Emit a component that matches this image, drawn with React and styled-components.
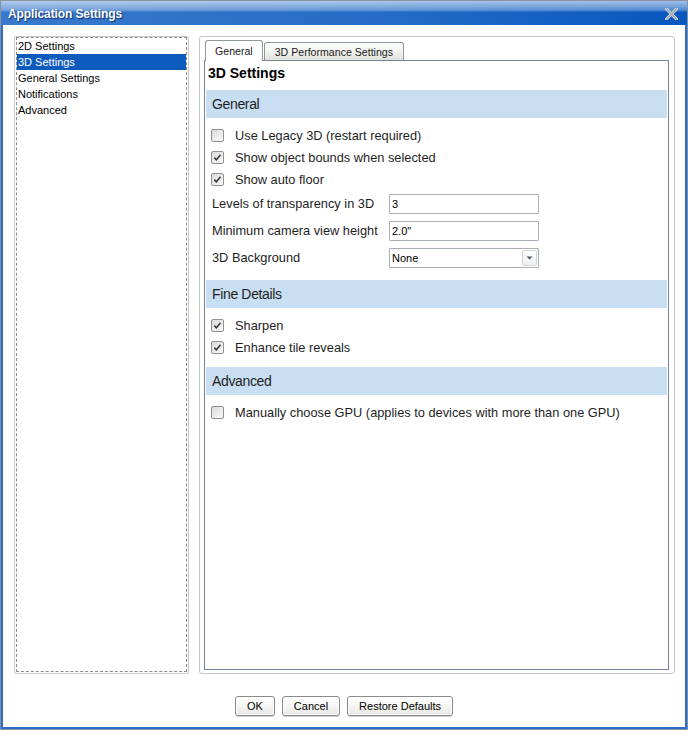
import React from "react";
import styled, { createGlobalStyle } from "styled-components";

const GlobalStyle = createGlobalStyle`
  html, body { margin: 0; padding: 0; background: #ffffff; }
  body { font-family: "Liberation Sans", Arial, sans-serif; color: #1a1a1a; }
  * { box-sizing: border-box; }
`;

const Window = styled.div`
  width: 688px;
  height: 730px;
  display: flex;
  flex-direction: column;
  border: 1px solid #8793a2;
  background: #ffffff;
`;

const TitleBar = styled.div`
  height: 24px;
  flex: none;
  display: flex;
  align-items: center;
  justify-content: space-between;
  padding: 1px 9px 0 7px;
  background:
    linear-gradient(180deg, rgba(255,255,255,0.62) 0%, rgba(255,255,255,0.3) 38%, rgba(255,255,255,0) 46%),
    linear-gradient(90deg, #3a7acd 0%, #246cc6 55%, #0857bf 100%);
`;

const Title = styled.span`
  font-weight: bold;
  font-size: 12px;
  color: #ffffff;
  text-shadow: 1px 1px 1px rgba(0, 20, 70, 0.75);
  letter-spacing: -0.1px;
`;

const CloseIcon = styled.svg`
  width: 13px;
  height: 12px;
  display: block;
`;

const Client = styled.div`
  flex: 1;
  min-height: 0;
  display: flex;
  flex-direction: column;
  border: 2px solid #2b6dc6;
  border-top: none;
  padding: 11px 10px 0 11px;
`;

const Main = styled.div`
  flex: 1;
  min-height: 0;
  display: flex;
  gap: 10px;
`;

const ListOuter = styled.div`
  width: 175px;
  flex: none;
  border: 1px solid #c9c9c9;
  border-radius: 2px;
  padding: 0 1px 1px 1px;
  display: flex;
`;

const ListInner = styled.div`
  flex: 1;
  border: 1px dashed #8c8c8c;
  display: flex;
  flex-direction: column;
`;

const ListItem = styled.div`
  height: 16px;
  line-height: 16px;
  font-size: 11px;
  padding-left: 1px;
  color: ${(p) => (p.$selected ? "#ffffff" : "#000000")};
  background: ${(p) => (p.$selected ? "#0e5bbe" : "transparent")};
`;

const Panel = styled.div`
  flex: 1;
  border: 1px solid #c4c4c4;
  border-radius: 3px;
  padding: 3px 5px 3px 4px;
  display: flex;
  flex-direction: column;
`;

const TabStrip = styled.div`
  height: 21px;
  flex: none;
  display: flex;
  align-items: flex-start;
  padding-left: 1px;
  margin-bottom: -1px;
  position: relative;
  z-index: 1;
`;

const Tab = styled.div`
  font-size: 10.6px;
  color: #1a1a1a;
  border: 1px solid #8f999c;
  border-bottom: none;
  border-radius: 3px 3px 0 0;
  display: flex;
  align-items: center;
  height: ${(p) => (p.$active ? "21px" : "18px")};
  margin-top: ${(p) => (p.$active ? "0" : "2px")};
  padding: ${(p) => (p.$active ? "0 9px" : "1px 10px 0")};
  margin-left: ${(p) => (p.$active ? "0" : "1px")};
  background: ${(p) =>
    p.$active ? "#ffffff" : "linear-gradient(180deg, #fefefe 0%, #f3f3f0 50%, #e2e2dc 100%)"};
`;

const Content = styled.div`
  flex: 1;
  min-height: 0;
  border: 1px solid #76819a;
  padding: 1px;
  background: #ffffff;
`;

const Heading = styled.div`
  height: 22px;
  line-height: 22px;
  font-size: 14px;
  font-weight: bold;
  color: #000000;
  margin: 0 0 6px 2px;
`;

const Band = styled.div`
  height: 28px;
  line-height: 28px;
  background: #c8def2;
  padding-left: 6px;
  font-size: 14px;
  letter-spacing: -0.35px;
  color: #1e1e1e;
`;

const SectionBody = styled.div`
  padding: 6px 0 9px 5px;
`;

const CheckRow = styled.div`
  height: 22px;
  display: flex;
  align-items: center;
  gap: 11px;
  font-size: 12.8px;
  color: #1e1e1e;
`;

const Box = styled.span`
  width: 13px;
  height: 13px;
  flex: none;
  border: 1px solid #8e9094;
  border-radius: 2px;
  background: linear-gradient(135deg, #d9d9d9 0%, #ececec 55%, #f8f8f8 100%);
  display: flex;
  align-items: center;
  justify-content: center;
`;

const FieldRow = styled.div`
  height: 27px;
  display: flex;
  align-items: center;
  font-size: 12.8px;
  color: #1e1e1e;
`;

const FieldLabel = styled.span`
  width: 177px;
  margin-left: 1px;
  flex: none;
  white-space: nowrap;
`;

const Input = styled.div`
  width: 150px;
  height: 20px;
  border: 1px solid #a9afb8;
  border-radius: 1px;
  font-size: 11px;
  color: #000000;
  padding: 0 2px;
  display: flex;
  align-items: center;
  justify-content: space-between;
  background: #ffffff;
`;

const DropButton = styled.span`
  width: 15px;
  height: 16px;
  border: 1px solid #d2d4d8;
  border-radius: 2px;
  background: linear-gradient(180deg, #ffffff, #eceef0);
  display: flex;
  align-items: center;
  justify-content: center;
  margin-right: -1px;
`;

const Footer = styled.div`
  flex: none;
  display: flex;
  justify-content: center;
  gap: 7px;
  padding: 22px 1px 11px 0;
`;

const Button = styled.button`
  height: 20px;
  padding: 0 11px;
  font-family: "Liberation Sans", Arial, sans-serif;
  font-size: 11px;
  color: #000000;
  border: 1px solid #8a8a8a;
  border-radius: 3px;
  background: linear-gradient(180deg, #ffffff 0%, #f6f6f4 50%, #e6e6e2 100%);
  box-shadow: inset 0 0 0 1px #ffffff, 0 1px 0 #d0d0d0;
`;

const Check = ({ checked }) => (
  <Box>
    {checked && (
      <svg width="9" height="9" viewBox="0 0 9 9">
        <path d="M1.3 4.6 L3.4 6.8 L7.6 1.8" fill="none" stroke="#3c3c3c" strokeWidth="1.6" />
      </svg>
    )}
  </Box>
);

const checkSections = [
  {
    title: "General",
    checks: [
      ["Use Legacy 3D (restart required)", false],
      ["Show object bounds when selected", true],
      ["Show auto floor", true],
    ],
    fields: true,
  },
  {
    title: "Fine Details",
    checks: [
      ["Sharpen", true],
      ["Enhance tile reveals", true],
    ],
  },
  {
    title: "Advanced",
    checks: [["Manually choose GPU (applies to devices with more than one GPU)", false]],
  },
];

export default function App() {
  const items = ["2D Settings", "3D Settings", "General Settings", "Notifications", "Advanced"];
  return (
    <>
      <GlobalStyle />
      <Window>
        <TitleBar>
          <Title>Application Settings</Title>
          <CloseIcon viewBox="0 0 13 12">
            <path d="M1.5 1 L11.5 11 M11.5 1 L1.5 11" stroke="#e8eef6" strokeWidth="3" strokeLinecap="round" />
            <path d="M1.5 1 L11.5 11 M11.5 1 L1.5 11" stroke="#a9b0b8" strokeWidth="2" strokeLinecap="round" />
          </CloseIcon>
        </TitleBar>
        <Client>
          <Main>
            <ListOuter>
              <ListInner>
                {items.map((it) => (
                  <ListItem key={it} $selected={it === "3D Settings"}>
                    {it}
                  </ListItem>
                ))}
              </ListInner>
            </ListOuter>
            <Panel>
              <TabStrip>
                <Tab $active>General</Tab>
                <Tab>3D Performance Settings</Tab>
              </TabStrip>
              <Content>
                <Heading>3D Settings</Heading>
                {checkSections.map((s) => (
                  <div key={s.title}>
                    <Band>{s.title}</Band>
                    <SectionBody>
                      {s.checks.map(([label, on]) => (
                        <CheckRow key={label}>
                          <Check checked={on} />
                          <span>{label}</span>
                        </CheckRow>
                      ))}
                      {s.fields && (
                        <>
                          <FieldRow>
                            <FieldLabel>Levels of transparency in 3D</FieldLabel>
                            <Input>3</Input>
                          </FieldRow>
                          <FieldRow>
                            <FieldLabel>Minimum camera view height</FieldLabel>
                            <Input>2.0"</Input>
                          </FieldRow>
                          <FieldRow>
                            <FieldLabel>3D Background</FieldLabel>
                            <Input>
                              <span>None</span>
                              <DropButton>
                                <svg width="7" height="4" viewBox="0 0 7 4">
                                  <path d="M0.5 0.5 L6.5 0.5 L3.5 3.5 Z" fill="#555" />
                                </svg>
                              </DropButton>
                            </Input>
                          </FieldRow>
                        </>
                      )}
                    </SectionBody>
                  </div>
                ))}
              </Content>
            </Panel>
          </Main>
          <Footer>
            <Button>OK</Button>
            <Button>Cancel</Button>
            <Button>Restore Defaults</Button>
          </Footer>
        </Client>
      </Window>
    </>
  );
}
